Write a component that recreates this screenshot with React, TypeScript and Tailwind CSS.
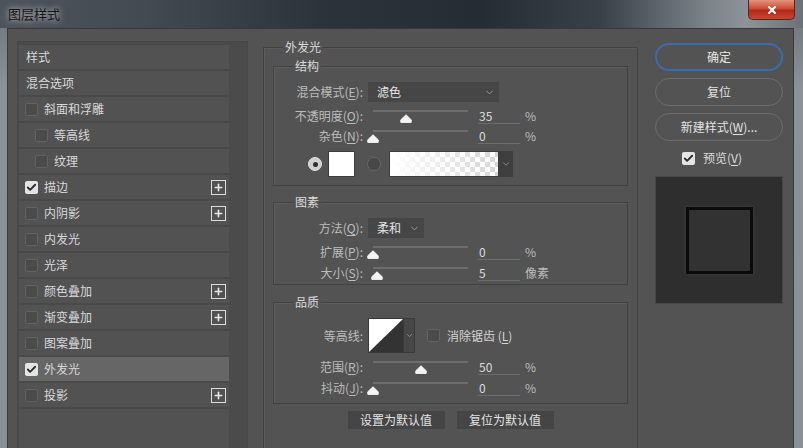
import { Check, ChevronDown, Plus, X } from "lucide-react";
import type { ReactNode } from "react";

type Row = {
  label: string;
  check?: boolean;
  checked?: boolean;
  indent?: boolean;
  plus?: boolean;
  active?: boolean;
};

const rows: Row[] = [
  { label: "样式" },
  { label: "混合选项" },
  { label: "斜面和浮雕", check: true },
  { label: "等高线", check: true, indent: true },
  { label: "纹理", check: true, indent: true },
  { label: "描边", check: true, checked: true, plus: true },
  { label: "内阴影", check: true, plus: true },
  { label: "内发光", check: true },
  { label: "光泽", check: true },
  { label: "颜色叠加", check: true, plus: true },
  { label: "渐变叠加", check: true, plus: true },
  { label: "图案叠加", check: true },
  { label: "外发光", check: true, checked: true, active: true },
  { label: "投影", check: true, plus: true },
];

function CheckBox({ checked }: { checked?: boolean }) {
  return checked ? (
    <span className="flex h-[13px] w-[13px] shrink-0 items-center justify-center rounded-[2px] bg-[#e4e4e4]">
      <Check size={11} strokeWidth={4} className="text-[#2a2a2a]" />
    </span>
  ) : (
    <span className="block h-[13px] w-[13px] shrink-0 rounded-[2px] border border-[#616161] bg-[#4b4b4b]" />
  );
}

function Key({ k }: { k: string }) {
  return <span className="underline underline-offset-2">{k}</span>;
}

function Slider({ pos }: { pos: number }) {
  return (
    <div className="relative ml-[5px] h-[20px] w-[105px] pt-[4px]">
      <div className="mx-[5px] h-[2px] bg-[#6d6d6d]" />
      {/* thumb */}
      <svg
        className="absolute top-[8px]"
        style={{ left: 5 + pos * 95 - 6 }}
        width="12"
        height="9"
        viewBox="0 0 12 9"
      >
        <path
          d="M6 0.8 L11.2 5.8 L11.2 8.4 L0.8 8.4 L0.8 5.8 Z"
          fill="#f3f3f3"
          stroke="#f3f3f3"
          strokeLinejoin="round"
        />
      </svg>
    </div>
  );
}

function SliderRow({
  label,
  value,
  pos,
  unit,
  className,
}: {
  label: ReactNode;
  value: string;
  pos: number;
  unit: string;
  className: string;
}) {
  return (
    <div className={"flex h-[20px] items-center " + className}>
      <span className="w-[89px] text-right text-[#bcbcbc]">{label}</span>
      <Slider pos={pos} />
      <span className="ml-[5px] h-[18px] w-[42px] self-start border-b border-[#6c6c6c] pl-[1px] leading-[19px] text-[#dcdcdc]">
        {value}
      </span>
      <span className="ml-[5px] text-[#bcbcbc]">{unit}</span>
    </div>
  );
}

function Select({ text, className }: { text: string; className: string }) {
  return (
    <div
      className={
        "ml-[5px] flex h-[20px] items-center justify-between bg-[#464646] pl-[9px] pr-[4px] text-[#e4e4e4] " +
        className
      }
    >
      <span>{text}</span>
      <ChevronDown size={11} strokeWidth={1.5} className="text-[#b5b5b5]" />
    </div>
  );
}

function Group({
  title,
  className,
  children,
}: {
  title: string;
  className: string;
  children: ReactNode;
}) {
  return (
    <fieldset
      className={
        "mx-[9px] border border-[#424242] shadow-[inset_1px_1px_0_#5c5c5c] " +
        className
      }
    >
      <legend className="ml-[19px] bg-[#535353] px-[2px] leading-[16px] text-[#dadada]">
        {title}
      </legend>
      {children}
    </fieldset>
  );
}

export default function App() {
  return (
    <div className="flex h-[448px] w-[803px] flex-col overflow-hidden bg-[linear-gradient(to_bottom,#6b7278,#8c9297_20%,#8a9095)] font-['Noto_Sans_CJK_SC','Noto_Sans',sans-serif] text-[12px] leading-[16px]">
      {/* title bar */}
      <div className="flex h-[28px] shrink-0 items-start justify-between bg-[linear-gradient(to_right,#4d545b_0%,#434a51_18%,#2c333b_40%,#252c34_60%,#3a4148_75%,#7b8288_88%,#8d9398_93%,#6a7177_100%)]">
        <span className="ml-[8px] mt-[6px] text-[13px] text-[#161616] [text-shadow:0_0_6px_rgba(255,255,255,0.85)]">
          图层样式
        </span>
        <span className="mr-[8px] flex h-[20px] w-[47px] items-center justify-center rounded-b-[5px] border border-t-0 border-[#5c231b] bg-[linear-gradient(to_bottom,#e4937f,#cc4d36_45%,#b2291a_55%,#c8472f)]">
          <X size={12} strokeWidth={4} className="text-white" />
        </span>
      </div>

      <div className="flex flex-1 pl-[7px] pr-[9px]">
        <div className="flex flex-1 border-l border-r border-t border-[#3a3a3a] bg-[#535353] pl-[9px] pt-[10px]">
          {/* left list */}
          <div className="mt-[2px] flex h-[420px] w-[231px] border border-[#474747] bg-[#4b4b4b] pl-[1px] pt-[3px]">
            <div className="flex w-[210px] flex-col bg-[#525252]">
              {rows.map((r) => (
                <div
                  key={r.label}
                  className={
                    "flex h-[26px] items-center border-b-2 border-[#494949] pr-[3px] text-[#d8d8d8] " +
                    (r.active ? "bg-[#666666]" : "") +
                    (r.indent ? " pl-[16px]" : " pl-[6px]")
                  }
                >
                  {r.check ? <CheckBox checked={r.checked} /> : null}
                  <span className={r.check ? "ml-[6px] flex-1" : "ml-[1px] flex-1"}>
                    {r.label}
                  </span>
                  {r.plus ? (
                    <span className="flex h-[15px] w-[15px] items-center justify-center border-[1.5px] border-[#dcdcdc]">
                      <Plus size={11} strokeWidth={3.5} className="text-[#e8e8e8]" />
                    </span>
                  ) : null}
                </div>
              ))}
            </div>
          </div>

          {/* middle */}
          <fieldset className="ml-[15px] h-[440px] w-[375px] shrink-0 border border-[#424242] shadow-[inset_1px_1px_0_#5c5c5c]">
            <legend className="ml-[19px] bg-[#535353] px-[2px] leading-[16px] text-[#dadada]">
              外发光
            </legend>

            <Group title="结构" className="mt-[3px] pb-[8px] pt-[8px]">
              <div className="flex h-[20px] items-center">
                <span className="w-[89px] text-right text-[#bcbcbc]">
                  混合模式(<Key k="E" />):
                </span>
                <Select text="滤色" className="w-[131px]" />
              </div>
              <SliderRow
                label={
                  <>
                    不透明度(<Key k="O" />):
                  </>
                }
                value="35"
                pos={0.35}
                unit="%"
                className="mt-[4px]"
              />
              <SliderRow
                label={
                  <>
                    杂色(<Key k="N" />):
                  </>
                }
                value="0"
                pos={0}
                unit="%"
                className="mt-[0px]"
              />
              <div className="mt-[5px] flex h-[26px] items-center">
                <span className="ml-[34px] flex h-[14px] w-[14px] items-center justify-center rounded-full border border-[#e2e2e2] bg-[#cfcfcf]">
                  <span className="h-[5px] w-[5px] rounded-full bg-[#2c2c2c]" />
                </span>
                <span className="ml-[6px] h-[26px] w-[27px] border border-[#3c3c3c] bg-white" />
                <span className="ml-[12px] h-[14px] w-[14px] rounded-full border border-[#666666] bg-[#474747]" />
                <span className="ml-[8px] h-[26px] w-[110px] border border-[#3c3c3c] [background-image:linear-gradient(to_right,#ffffff,rgba(255,255,255,0)),repeating-conic-gradient(#d6d6d6_0%_25%,#ffffff_0%_50%)] [background-size:100%_100%,10px_10px]" />
                <span className="flex h-[26px] w-[14px] items-center justify-center bg-[#3f3f3f]">
                  <ChevronDown size={10} strokeWidth={1.5} className="text-[#b5b5b5]" />
                </span>
              </div>
            </Group>

            <Group title="图素" className="mt-[8px] pb-[1px] pt-[8px]">
              <div className="flex h-[20px] items-center">
                <span className="w-[89px] text-right text-[#bcbcbc]">
                  方法(<Key k="Q" />):
                </span>
                <Select text="柔和" className="w-[56px]" />
              </div>
              <SliderRow
                label={
                  <>
                    扩展(<Key k="P" />):
                  </>
                }
                value="0"
                pos={0}
                unit="%"
                className="mt-[4px]"
              />
              <SliderRow
                label={
                  <>
                    大小(<Key k="S" />):
                  </>
                }
                value="5"
                pos={0.04}
                unit="像素"
                className="mt-[1px]"
              />
            </Group>

            <Group title="品质" className="mt-[9px] pb-[5px] pt-[8px]">
              <div className="flex h-[35px] items-center">
                <span className="w-[89px] text-right text-[#bcbcbc]">等高线:</span>
                <span className="ml-[5px] flex h-[35px] border border-[#3a3a3a]">
                  <svg width="34" height="33" viewBox="0 0 34 33">
                    <rect width="34" height="33" fill="#333333" />
                    <polygon points="0,0 34,0 0,33" fill="#ffffff" />
                  </svg>
                  <span className="flex w-[11px] items-center justify-center border-l border-[#3a3a3a] bg-[#474747]">
                    <ChevronDown size={9} strokeWidth={1.5} className="text-[#b5b5b5]" />
                  </span>
                </span>
                <span className="ml-[12px] flex">
                  <CheckBox />
                </span>
                <span className="ml-[7px] text-[#d4d4d4]">
                  消除锯齿 (<Key k="L" />)
                </span>
              </div>
              <SliderRow
                label={
                  <>
                    范围(<Key k="R" />):
                  </>
                }
                value="50"
                pos={0.5}
                unit="%"
                className="mt-[4px]"
              />
              <SliderRow
                label={
                  <>
                    抖动(<Key k="J" />):
                  </>
                }
                value="0"
                pos={0}
                unit="%"
                className="mt-[1px]"
              />
            </Group>

            <div className="mt-[7px] flex justify-center gap-[12px]">
              <span className="flex h-[18px] w-[97px] items-center justify-center bg-[#454545] text-[#e2e2e2]">
                设置为默认值
              </span>
              <span className="flex h-[18px] w-[97px] items-center justify-center bg-[#454545] text-[#e2e2e2]">
                复位为默认值
              </span>
            </div>
          </fieldset>

          {/* right */}
          <div className="ml-[17px] mt-[4px] flex w-[128px] shrink-0 flex-col">
            <span className="flex h-[28px] items-center justify-center rounded-[14px] border-2 border-[#3d6aa8] text-[#e6e6e6]">
              确定
            </span>
            <span className="mt-[7px] flex h-[28px] items-center justify-center rounded-[14px] border border-[#6b6b6b] text-[#e2e2e2]">
              复位
            </span>
            <span className="mt-[7px] flex h-[28px] items-center justify-center rounded-[14px] border border-[#6b6b6b] text-[#e2e2e2]">
              新建样式(<Key k="W" />)...
            </span>
            <div className="mt-[10px] flex h-[14px] items-center pl-[27px]">
              <CheckBox checked />
              <span className="ml-[8px] text-[#dcdcdc]">
                预览(<Key k="V" />)
              </span>
            </div>
            <div className="mt-[11px] flex h-[128px] items-center justify-center border border-[#474747] bg-[#2e2e2e]">
              <div className="h-[67px] w-[67px] border-[3px] border-[#0b0b0b] bg-[#323232] shadow-[0_0_4px_rgba(255,255,255,0.1)]" />
            </div>
          </div>
        </div>
      </div>
    </div>
  );
}
